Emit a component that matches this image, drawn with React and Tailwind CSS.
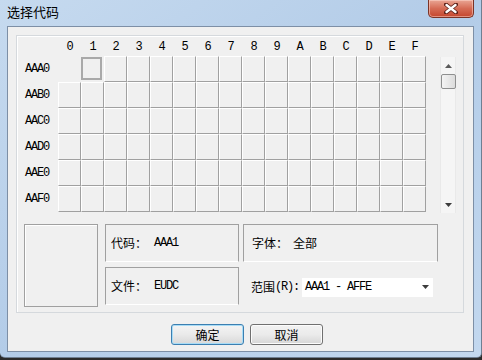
import React from "react";

const cols = ["0", "1", "2", "3", "4", "5", "6", "7", "8", "9", "A", "B", "C", "D", "E", "F"];
const rows = ["AAA0", "AAB0", "AAC0", "AAD0", "AAE0", "AAF0"];

const mono = "font-['Liberation_Mono',monospace] text-[12px] tracking-[-1.2px] text-black";
const cjk = "font-['Noto_Sans_CJK_SC',sans-serif] text-[12px] text-black";

const Cell = ({ row, col }) => {
  if (row === 0 && col === 0) return <div className="w-[23px] h-[26px]" />;
  if (row === 0 && col === 1)
    return (
      <div className="w-[23px] h-[26px] pr-[2px] pb-[2px] pt-[1px]">
        <div className="w-full h-full border-2 border-[#a9a9a9] bg-[#f0f0f0]" />
      </div>
    );
  return (
    <div className="w-[23px] h-[26px] border border-t-white border-l-white border-r-[#a0a0a0] border-b-[#a0a0a0] bg-[#f0f0f0]" />
  );
};

const Triangle = ({ down }) => (
  <svg width="7" height="4" viewBox="0 0 7 4">
    {down ? <path d="M0 0 H7 L3.5 4 Z" fill="#3c3c3c" /> : <path d="M0 4 H7 L3.5 0 Z" fill="#5a5a5a" />}
  </svg>
);

const ScrollBar = () => (
  <div className="mt-[1px] w-[16px] h-[156px] flex flex-col items-center border-x border-[#e9e9e9] bg-[#f5f5f5]">
    <div className="h-[17px] w-full flex items-center justify-center">
      <Triangle />
    </div>
    <div className="w-[15px] h-[15px] rounded-[2px] border border-[#8e8f8f] bg-gradient-to-r from-[#f4f4f4] to-[#dcdcdc]" />
    <div className="flex-1" />
    <div className="h-[17px] w-full flex items-center justify-center">
      <Triangle down />
    </div>
  </div>
);

export default function App() {
  return (
    <div className="w-[482px] h-[360px] overflow-hidden bg-[#2b2b2b]">
      <div className="w-[482px] h-[358px] flex flex-col rounded-b-[5px] border-r border-b border-[#6f7f92] bg-gradient-to-br from-[#c6daef] via-[#b3cce8] to-[#c3d8ef]">
        {/* title bar */}
        <div className="h-[26px] flex items-start justify-between">
          <span className="pl-[7px] pt-[5px] leading-[14px] font-['Noto_Sans_CJK_SC',sans-serif] text-[13px] text-black">
            选择代码
          </span>
          <div className="mr-[7px] w-[46px] h-[18px] flex items-center justify-center rounded-b-[5px] border border-t-0 border-[#7b3326] bg-gradient-to-b from-[#e9a594] via-[#d56b55] to-[#c4452c] shadow-[inset_0_0_0_1px_rgba(255,220,210,0.5)]">
            <svg width="14" height="11" viewBox="0 0 14 11">
              <path d="M2 1.5 L12 9.5 M12 1.5 L2 9.5" stroke="#5a1f17" strokeWidth="4" strokeLinecap="round" />
              <path d="M2.5 2 L11.5 9 M11.5 2 L2.5 9" stroke="#ffffff" strokeWidth="2.4" strokeLinecap="round" />
            </svg>
          </div>
        </div>

        {/* client area */}
        <div className="mx-[7px] flex-1 flex flex-col border border-[#7d8fa6] bg-[#f0f0f0] pl-[8px] pt-[8px]">
          <div className="w-[448px] flex flex-col border border-[#d5d9dd] shadow-[inset_1px_1px_0_#ffffff] pb-[5px]">
            {/* column header */}
            <div className="h-[20px] flex pl-[41px] pt-[5px]">
              {cols.map((c) => (
                <div key={c} className={`w-[23px] text-center leading-[12px] ${mono}`}>
                  {c}
                </div>
              ))}
            </div>

            {/* grid + scrollbar */}
            <div className="flex items-start pl-[8px]">
              <div className="flex flex-col">
                {rows.map((r, ri) => (
                  <div key={r} className="flex items-center">
                    <div className={`w-[33px] ${mono}`}>{r}</div>
                    {cols.map((c, ci) => (
                      <Cell key={c} row={ri} col={ci} />
                    ))}
                  </div>
                ))}
              </div>
              <div className="ml-[14px]">
                <ScrollBar />
              </div>
            </div>

            {/* info section */}
            <div className="mt-[11px] pl-[7px] flex items-start">
              <div className="w-[74px] h-[83px] border border-[#a0a0a0] shadow-[inset_1px_1px_0_#ffffff]" />
              <div className="ml-[7px] w-[134px] flex flex-col gap-[5px]">
                <div className="h-[38px] flex items-center pl-[5px] border border-t-[#a0a0a0] border-l-[#a0a0a0] border-r-[#a0a0a0] border-b-white">
                  <span className={cjk}>代码：</span>
                  <span className={`ml-[7px] ${mono}`}>AAA1</span>
                </div>
                <div className="h-[38px] flex items-center pl-[5px] border border-t-[#a0a0a0] border-l-[#a0a0a0] border-r-[#a0a0a0] border-b-white">
                  <span className={cjk}>文件：</span>
                  <span className={`ml-[7px] ${mono}`}>EUDC</span>
                </div>
              </div>
              <div className="ml-[4px] w-[195px] flex flex-col">
                <div className="h-[38px] flex items-center pl-[8px] border border-t-[#a0a0a0] border-l-[#a0a0a0] border-r-[#a0a0a0] border-b-white">
                  <span className={cjk}>字体：</span>
                  <span className={`ml-[5px] ${cjk}`}>全部</span>
                </div>
                <div className="mt-[15px] h-[20px] flex items-center pl-[8px]">
                  <span className={cjk}>范围</span>
                  <span className={mono}>(R):</span>
                  <div className="ml-[3px] w-[131px] h-[19px] flex items-center justify-between bg-white pl-[3px] pr-[4px]">
                    <span className={`${mono} whitespace-pre`}>AAA1 - AFFE</span>
                    <Triangle down />
                  </div>
                </div>
              </div>
            </div>
          </div>

          {/* buttons */}
          <div className="mt-[11px] flex gap-[6px] pl-[155px]">
            <button className="w-[73px] h-[21px] rounded-[3px] border border-[#3c7fb1] bg-gradient-to-b from-[#f4f4f4] via-[#eaeaea] to-[#d8d8d8] shadow-[inset_0_0_0_1px_#a8dcf6] flex items-center justify-center">
              <span className={cjk}>确定</span>
            </button>
            <button className="w-[73px] h-[21px] rounded-[3px] border border-[#707070] bg-gradient-to-b from-[#f2f2f2] via-[#ebebeb] to-[#d6d6d6] shadow-[inset_0_0_0_1px_#fcfcfc] flex items-center justify-center">
              <span className={cjk}>取消</span>
            </button>
          </div>
        </div>

        <div className="h-[5px]" />
      </div>
    </div>
  );
}
